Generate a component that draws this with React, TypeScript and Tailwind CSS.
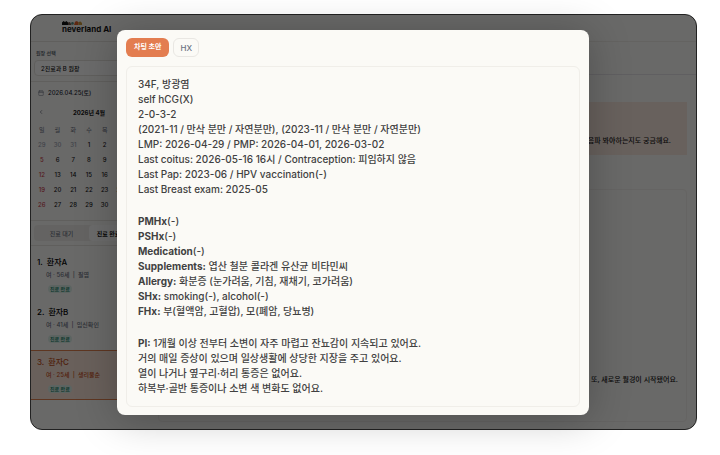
import React from 'react';
import clsx from 'clsx';
import { Calendar, ChevronLeft, ChevronRight } from 'lucide-react';

type Patient = {
  no: number;
  name: string;
  info: string;
  reason: string;
  active?: boolean;
};

type NoteLine = {
  label?: string;
  text: string;
};

const weekdays = ['일', '월', '화', '수', '목', '금', '토'];

const weeks = [
  [29, 30, 31, 1, 2, 3, 4],
  [5, 6, 7, 8, 9, 10, 11],
  [12, 13, 14, 15, 16, 17, 18],
  [19, 20, 21, 22, 23, 24, 25],
  [26, 27, 28, 29, 30, 31, 1],
];

const patients: Patient[] = [
  { no: 1, name: '환자A', info: '여 · 56세', reason: '질염' },
  { no: 2, name: '환자B', info: '여 · 41세', reason: '임신확인' },
  { no: 3, name: '환자C', info: '여 · 25세', reason: '생리불순', active: true },
];

const note: NoteLine[][] = [
  [
    { text: '34F, 방광염' },
    { text: 'self hCG(X)' },
    { text: '2-0-3-2' },
    { text: '(2021-11 / 만삭 분만 / 자연분만), (2023-11 / 만삭 분만 / 자연분만)' },
    { text: 'LMP: 2026-04-29 / PMP: 2026-04-01, 2026-03-02' },
    { text: 'Last coitus: 2026-05-16 16시 / Contraception: 피임하지 않음' },
    { text: 'Last Pap: 2023-06 / HPV vaccination(-)' },
    { text: 'Last Breast exam: 2025-05' },
  ],
  [
    { label: 'PMHx', text: '(-)' },
    { label: 'PSHx', text: '(-)' },
    { label: 'Medication', text: '(-)' },
    { label: 'Supplements:', text: ' 엽산 철분 콜라겐 유산균 비타민씨' },
    { label: 'Allergy:', text: ' 화분증 (눈가려움, 기침, 재채기, 코가려움)' },
    { label: 'SHx:', text: ' smoking(-), alcohol(-)' },
    { label: 'FHx:', text: ' 부(혈액암, 고혈압), 모(폐암, 당뇨병)' },
  ],
  [
    { label: 'PI:', text: ' 1개월 이상 전부터 소변이 자주 마렵고 잔뇨감이 지속되고 있어요.' },
    { text: '거의 매일 증상이 있으며 일상생활에 상당한 지장을 주고 있어요.' },
    { text: '열이 나거나 옆구리·허리 통증은 없어요.' },
    { text: '하복부·골반 통증이나 소변 색 변화도 없어요.' },
  ],
];

function Logo() {
  return (
    <div className="flex h-[27px] flex-col items-start justify-end pb-2 pl-8">
      <svg className="h-1 w-5" viewBox="0 0 20 4" aria-hidden="true">
        <path d="M0 4V1.5L1.5 0L3 1L4.5 0L6 1.5V4Z" fill="#111" />
        <path d="M6 4V1.5L8 1L9.5 4Z" fill="#6b5346" />
        <circle cx="10.5" cy="2.4" r="1.3" fill="#4f8d86" />
        <path d="M12 4L13 .8L15 0L16.5 1.5V4Z" fill="#e0612a" />
        <path d="M16.5 4V1L18.5 .5L20 2V4Z" fill="#c9973a" />
      </svg>
      <span className="text-[8px] leading-[8px] font-bold whitespace-nowrap">neverland AI</span>
    </div>
  );
}

function MonthCalendar() {
  return (
    <div className="px-1 pt-[6px]">
      <div className="flex items-center gap-1 px-1 text-[6px] leading-[10px] text-gray-800">
        <Calendar className="size-[6px] text-gray-500" />
        2026.04.25(토)
      </div>
      <div className="mt-2 flex h-3 items-center justify-between px-1">
        <button type="button" aria-label="이전 달">
          <ChevronLeft className="size-[6px] text-gray-700" />
        </button>
        <span className="text-[6px] font-bold">2026년 4월</span>
        <button type="button" aria-label="다음 달">
          <ChevronRight className="size-[6px] text-gray-700" />
        </button>
      </div>
      <table className="mt-[3px] w-full table-fixed text-center text-[6px]">
        <thead>
          <tr className="h-4 text-gray-500">
            {weekdays.map((day) => (
              <th key={day} className="p-0 font-normal">{day}</th>
            ))}
          </tr>
        </thead>
        <tbody>
          {weeks.map((week, row) => (
            <tr key={row} className="h-[15px]">
              {week.map((day, col) => (
                <td
                  key={col}
                  className={clsx(
                    'p-0',
                    row === 0 && day > 20 && 'text-gray-400',
                    row > 0 && col === 0 && 'text-[#c8404a]',
                  )}
                >
                  {day}
                </td>
              ))}
            </tr>
          ))}
        </tbody>
      </table>
    </div>
  );
}

function PatientItem({ patient }: { patient: Patient }) {
  return (
    <li className={clsx('h-[50px] border-y', patient.active ? 'border-[#e08050] bg-[#f9e4d8]' : 'border-transparent')}>
      <button type="button" className="flex h-full w-full flex-col items-start pt-1 pl-[7px] text-left whitespace-nowrap">
        <span className={clsx('flex gap-1 text-[8px] leading-[14px]', patient.active ? 'text-[#bd4d20]' : 'text-black')}>
          <span>{patient.no}.</span>
          {patient.name}
        </span>
        <span className={clsx('pl-[9px] text-[6px] leading-[12px]', patient.active ? 'text-[#c95020]' : 'text-gray-500')}>
          {patient.info} &nbsp;|&nbsp; {patient.reason}
        </span>
        <span className="mt-1 ml-[11px] rounded-sm bg-[#dcefe8] px-[2px] text-[5px] leading-[8px] text-[#087a60]">
          진료 완료
        </span>
      </button>
    </li>
  );
}

function Sidebar() {
  return (
    <aside className="w-[118px] shrink-0">
      <Logo />
      <div className="border-y border-[#e5e3de] px-1 pt-1 pb-[5px]">
        <label htmlFor="doctor" className="block pl-[2px] text-[5px] leading-[14px] text-gray-600">
          원장 선택
        </label>
        <select
          id="doctor"
          className="block h-4 w-full appearance-none rounded border border-[#e5e3de] bg-white px-[6px] text-[6px]"
        >
          <option>2진료과 B 원장</option>
        </select>
      </div>
      <MonthCalendar />
      <div className="mt-2 border-y border-[#e5e3de] px-1 py-1">
        <div className="grid h-4 grid-cols-2 rounded bg-[#efede9] text-[6px]">
          <button type="button" className="text-gray-500">진료 대기</button>
          <button type="button" className="rounded bg-white pr-4 font-bold">진료 완료</button>
        </div>
      </div>
      <ul className="pt-1">
        {patients.map((patient) => (
          <PatientItem key={patient.no} patient={patient} />
        ))}
      </ul>
    </aside>
  );
}

function MainPanel() {
  return (
    <main className="flex min-w-0 flex-1 flex-col text-right text-[7px] leading-[14px]">
      <div className="h-7 border-b border-[#efede8]" />
      <div className="h-[33px] border-b border-[#e5e3e8]" />
      <div className="flex flex-1 flex-col gap-[34px] px-[10px] pt-[27px] pb-2">
        <p className="flex h-[53px] items-end justify-end bg-[#f7e6dd] px-4 pb-[7px]">초음파 봐야하는지도 궁금해요.</p>
        <div className="flex flex-1 flex-col justify-end rounded border border-[#f1efeb] px-2 pb-[34px]">
          <p>또, 새로운 월경이 시작됐어요.</p>
        </div>
      </div>
    </main>
  );
}

function ChartModal() {
  return (
    <section
      role="dialog"
      aria-label="차팅 초안"
      className="flex flex-1 flex-col gap-[9px] rounded-lg bg-[#fbfaf6] px-[9px] py-2 shadow-[0_4px_40px_rgba(0,0,0,0.25)]"
    >
      <div className="flex gap-1 text-[7px]">
        <button type="button" className="h-[19px] rounded-md bg-[#e37d50] px-2 font-bold text-white">
          차팅 초안
        </button>
        <button type="button" className="h-[19px] rounded-md border border-[#e9e7e3] px-[6px] text-[8px] text-gray-500">
          HX
        </button>
      </div>
      <article className="flex flex-1 flex-col gap-[17px] rounded-md border border-[#f0eee9] px-[11px] pt-[10px] text-[10px] leading-[15px] text-[#414141]">
        {note.map((block, i) => (
          <div key={i}>
            {block.map((line) => (
              <p key={line.label ?? line.text}>
                {line.label && <strong className="font-bold">{line.label}</strong>}
                {line.text}
              </p>
            ))}
          </div>
        ))}
      </article>
    </section>
  );
}

export default function App() {
  return (
    <div className="flex min-h-screen bg-white pt-[14px] pr-[23px] pb-[25px] pl-[30px] font-['Inter','Noto_Sans_CJK_KR',sans-serif] font-medium text-[#171717]">
      <div className="relative flex flex-1 rounded-xl bg-[#faf9f7]">
        <div className="flex flex-1 overflow-hidden rounded-xl">
          <Sidebar />
          <MainPanel />
        </div>
        <div className="absolute inset-0 flex rounded-xl border border-[#222] bg-black/58 pt-[15px] pr-[107px] pb-[14px] pl-[86px]">
          <ChartModal />
        </div>
      </div>
    </div>
  );
}
